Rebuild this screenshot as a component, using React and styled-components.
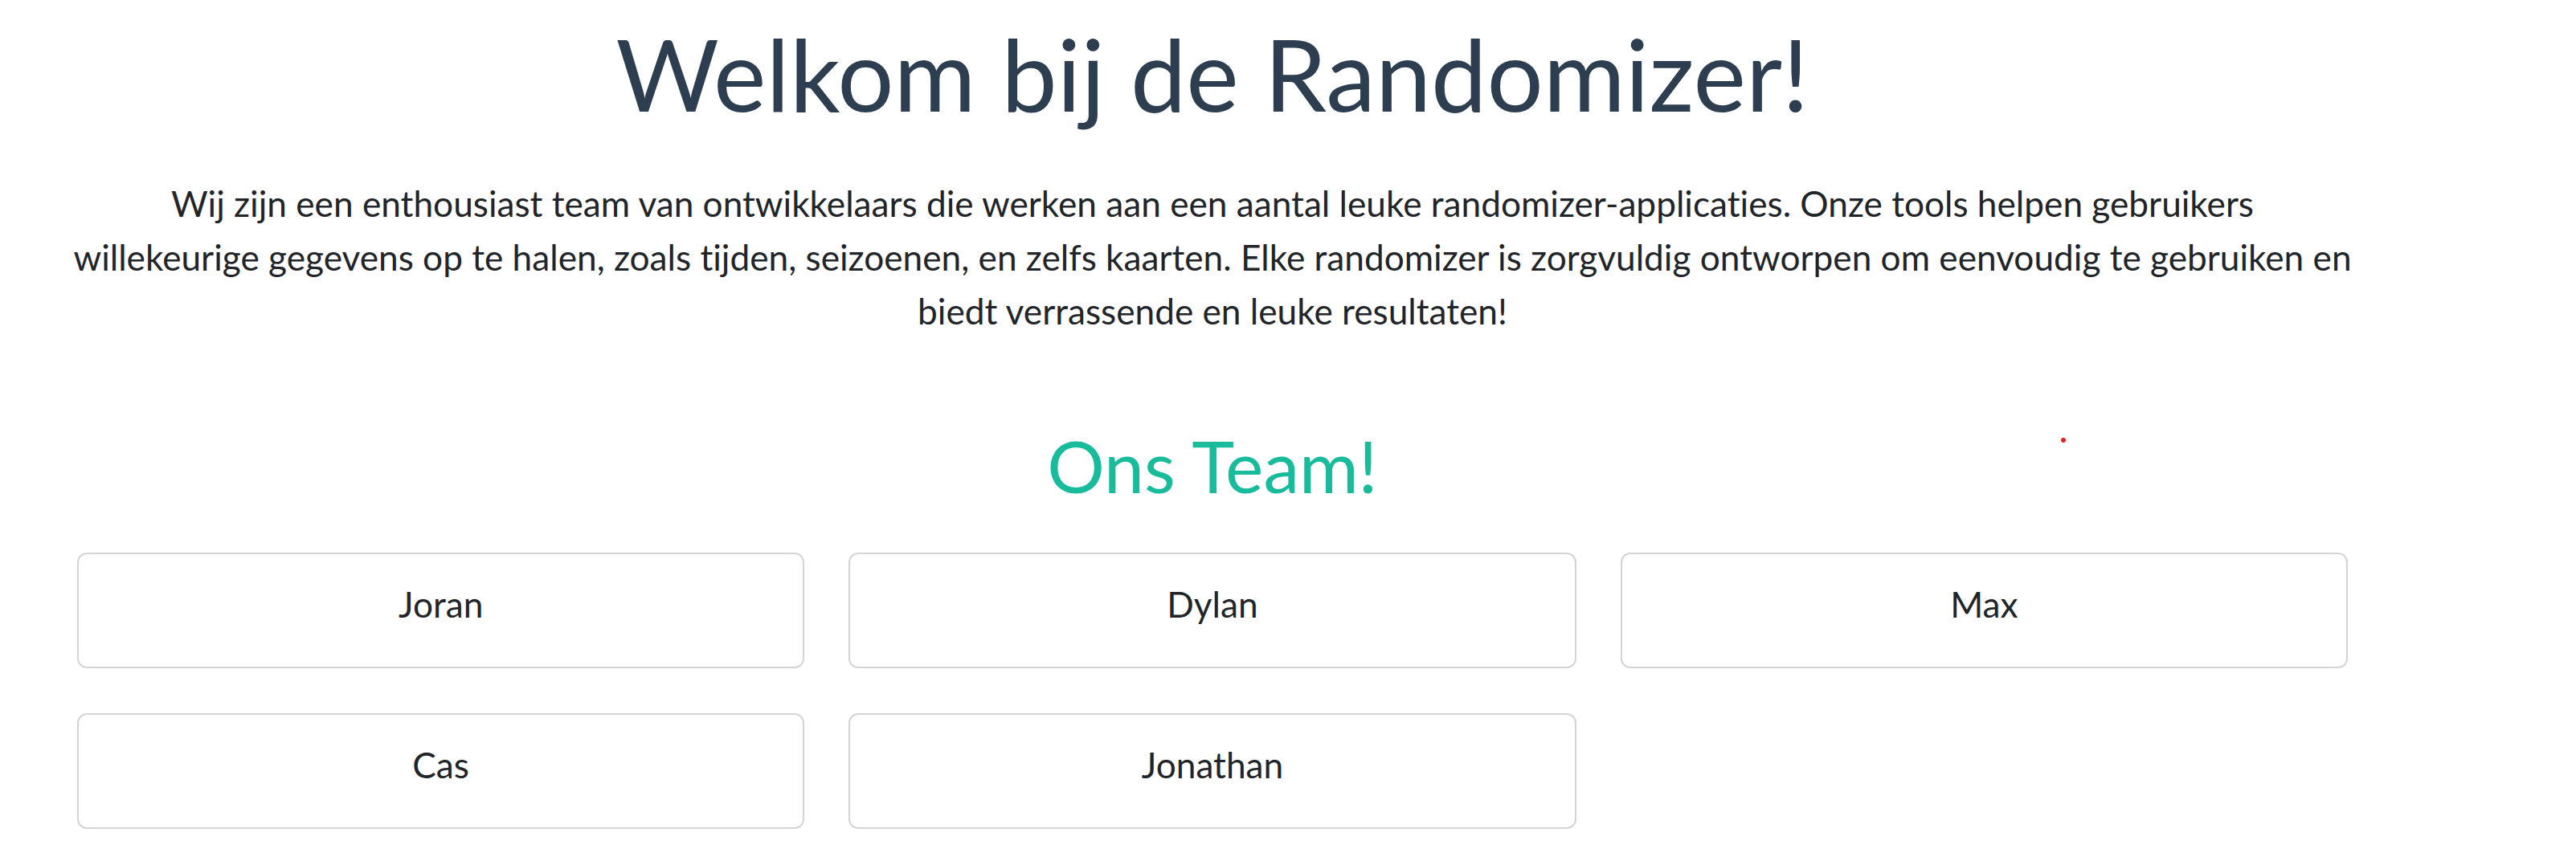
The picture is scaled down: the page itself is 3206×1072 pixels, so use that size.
import React from "react";
import styled, { createGlobalStyle } from "styled-components";

const GlobalStyle = createGlobalStyle`
  html, body {
    margin: 0;
    padding: 0;
    background: #ffffff;
  }
  body {
    font-family: Lato, "Open Sans", "Liberation Sans", sans-serif;
    color: #212529;
    font-variant-ligatures: none;
    font-feature-settings: "liga" 0, "clig" 0;
  }
  * { box-sizing: border-box; }
`;

const Page = styled.div`
  position: relative;
  width: 3206px;
  min-height: 1072px;
  padding: 17px 0 0 96px;
`;

const Container = styled.main`
  width: 2826px;
  display: flex;
  flex-direction: column;
  align-items: stretch;
`;

const Title = styled.h1`
  margin: 0;
  font-size: 124px;
  font-weight: 400;
  line-height: 1.2;
  color: #2c3e50;
  text-align: center;
`;

const Intro = styled.p`
  margin: 53px -40px 0;
  font-size: 44.2px;
  line-height: 67.2px;
  text-align: center;
  color: #212529;
`;

const SectionTitle = styled.h2`
  margin: 106px 0 0;
  font-size: 89.6px;
  font-weight: 400;
  line-height: 1.2;
  color: #18bc9c;
  text-align: center;
`;

const TeamGrid = styled.div`
  margin-top: 54px;
  display: grid;
  grid-template-columns: repeat(3, 1fr);
  column-gap: 55px;
  row-gap: 56px;
`;

const MemberCard = styled.div`
  height: 144px;
  border: 2px solid #d4d4d4;
  border-radius: 12px;
  padding: 28px 16px 0;
  text-align: center;
  font-size: 44.2px;
  line-height: 67.2px;
  color: #212529;
`;

const Dot = styled.span`
  position: absolute;
  left: 2565px;
  top: 545px;
  width: 6px;
  height: 6px;
  border-radius: 50%;
  background: #e52222;
`;

const members = ["Joran", "Dylan", "Max", "Cas", "Jonathan"];

export default function App() {
  return (
    <>
      <GlobalStyle />
      <Page>
        <Container>
          <Title>Welkom bij de Randomizer!</Title>
          <Intro>
            Wij zijn een enthousiast team van ontwikkelaars die werken aan een aantal leuke
            randomizer-applicaties. Onze tools helpen gebruikers
            <br />
            willekeurige gegevens op te halen, zoals tijden, seizoenen, en zelfs kaarten. Elke
            randomizer is zorgvuldig ontworpen om eenvoudig te gebruiken en
            <br />
            biedt verrassende en leuke resultaten!
          </Intro>
          <SectionTitle>Ons Team!</SectionTitle>
          <TeamGrid>
            {members.map((m) => (
              <MemberCard key={m}>{m}</MemberCard>
            ))}
          </TeamGrid>
        </Container>
        <Dot />
      </Page>
    </>
  );
}
